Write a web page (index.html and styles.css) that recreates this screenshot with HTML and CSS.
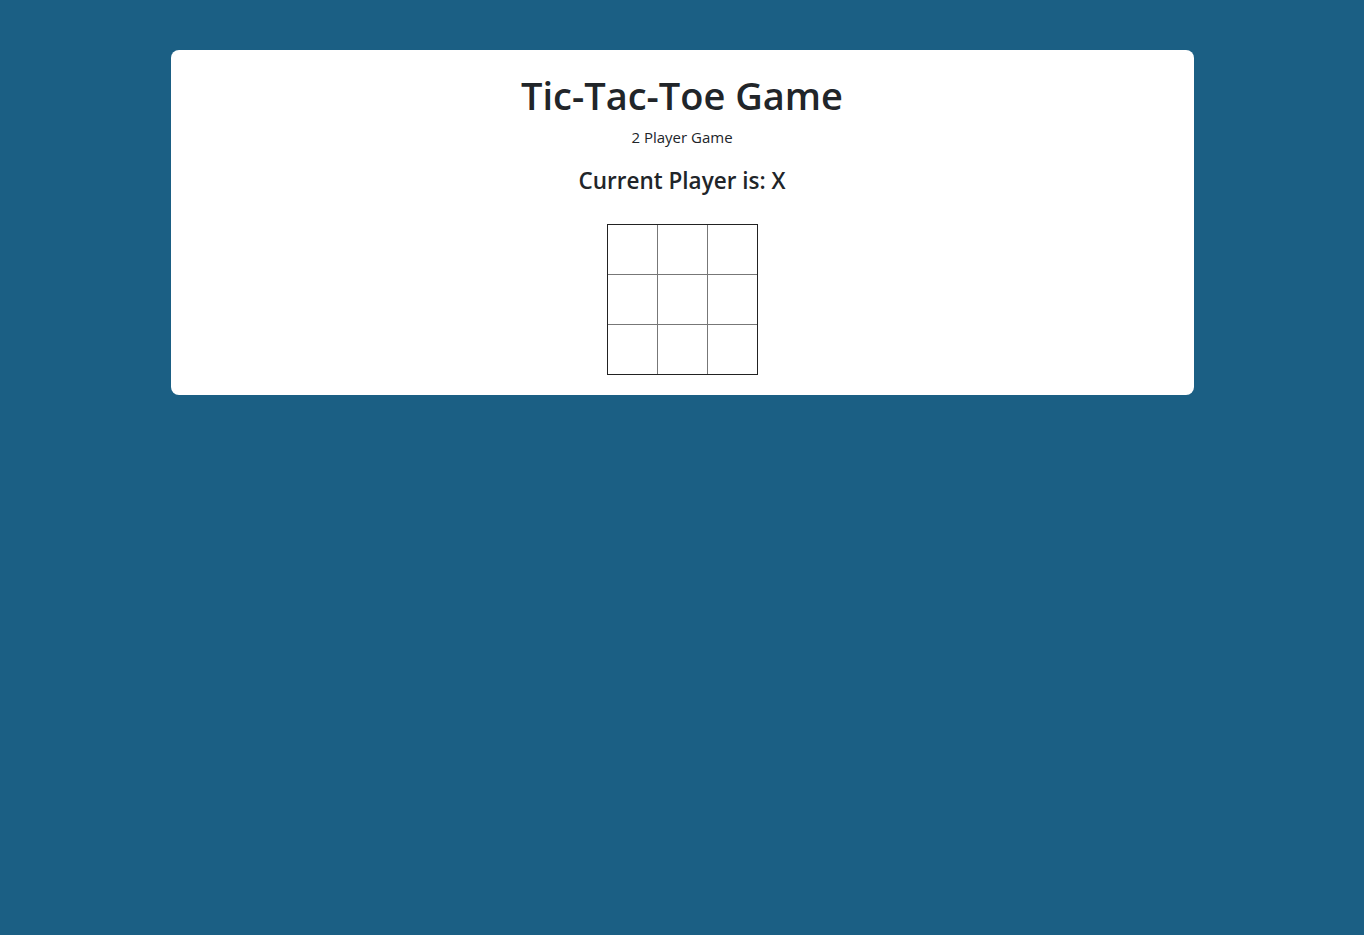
FILE: index.html
```html
<!DOCTYPE html>
<html lang="en">
<head>
<meta charset="utf-8">
<title>Tic-Tac-Toe Game</title>
<link rel="stylesheet" href="styles.css">
</head>
<body>
<main class="card">
  <h1 class="title">Tic-Tac-Toe Game</h1>
  <p class="subtitle">2 Player Game</p>
  <h2 class="status">Current Player is: X</h2>
  <div class="board">
    <div class="cell"></div><div class="cell"></div><div class="cell"></div>
    <div class="cell"></div><div class="cell"></div><div class="cell"></div>
    <div class="cell"></div><div class="cell"></div><div class="cell"></div>
  </div>
</main>
</body>
</html>
```
FILE: styles.css
```css
html, body {
  margin: 0;
  padding: 0;
}
body {
  background: #1b5f84;
  font-family: "Open Sans", "Noto Sans", sans-serif;
  color: #212529;
  padding-top: 50px;
}
.card {
  width: 75%;
  margin: 0 auto;
  background: #fff;
  border-radius: 8px;
  padding: 21px 0 20px;
  display: flex;
  flex-direction: column;
  align-items: center;
}
.title {
  margin: 0;
  font-size: 38px;
  font-weight: 600;
  line-height: 48px;
}
.subtitle {
  margin: 7px 0 0;
  font-size: 15px;
  line-height: 22px;
}
.status {
  margin: 18px 0 0;
  font-size: 22.5px;
  font-weight: 600;
  line-height: 30px;
}
.board {
  margin-top: 28px;
  display: grid;
  grid-template-columns: repeat(3, 49px);
  grid-auto-rows: 49px;
  gap: 1px;
  background: #777;
  border: 1px solid #222;
}
.cell {
  background: #fff;
}
```
